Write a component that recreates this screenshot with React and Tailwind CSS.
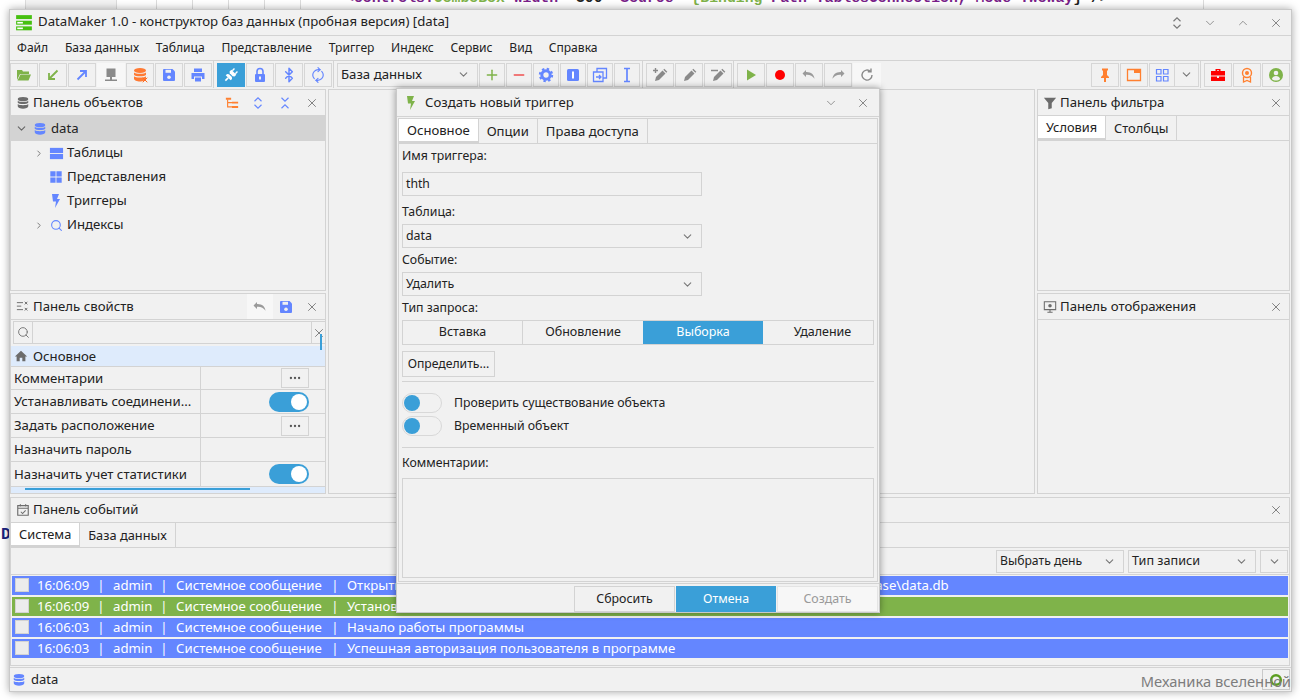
import { ChevronDown, ChevronRight, ChevronUp, X, Plus, Minus, Search, RefreshCw, Bluetooth, Ellipsis } from "lucide-react";

const B = "#6486ff";

function Svg({ size = 16, children, className = "" }) {
  return (
    <svg width={size} height={size} viewBox="0 0 16 16" className={`shrink-0 ${className}`}>
      {children}
    </svg>
  );
}

const Db = ({ color = "#6c6c6c", size = 16 }) => (
  <Svg size={size}>
    <ellipse cx="8" cy="3.500" rx="6" ry="2.500" fill={color} />
    <path d="M2 5.500c1 1.800 11 1.800 12 0v2.200c-1 2-11 2-12 0zM2 9.200c1 1.800 11 1.800 12 0v2.600c0 1.600-3 2.700-6 2.700s-6-1.100-6-2.700z" fill={color} />
  </Svg>
);

const Bolt = ({ color }) => (
  <Svg size={16}>
    <path d="M4 1h7L9 6h3l-5 9 1-6.500H5z" fill={color} />
  </Svg>
);

const Save = ({ color = B }) => (
  <Svg size={16}>
    <path d="M2 3a1 1 0 0 1 1-1h8.500L14 4.500V13a1 1 0 0 1-1 1H3a1 1 0 0 1-1-1z" fill={color} />
    <rect x="4.500" y="2.800" width="5.500" height="3" fill="#f1f1f1" />
    <circle cx="8" cy="10.200" r="1.800" fill="#f1f1f1" />
  </Svg>
);

const Undo = ({ color = "#9a9a9a", flip }) => (
  <Svg>
    <path
      d="M5 3L1.500 6.500 5 10V7.700c3.500-.3 6.500.7 8.500 4-.5-4-3.500-6.800-8.500-6.600z"
      fill={color}
      transform={flip ? "matrix(-1 0 0 1 16 0)" : undefined}
    />
  </Svg>
);

const UpDown = ({ color = "#777", size = 14, className = "" }) => (
  <Svg size={size} className={className}>
    <path d="M4 6l4-4 4 4M4 10l4 4 4-4" fill="none" stroke={color} strokeWidth="1.300" />
  </Svg>
);

const PencilIcon = ({ extra }) => (
  <Svg>
    <path d="M3 14l1-4 6.500-6.500 3 3L7 13z" fill="#8a8a8a" />
    <path d="M11.300 2.700l1-1 3 3-1 1z" fill="#8a8a8a" />
    {extra === "plus" && <path d="M3.500 1v5M1 3.500h5" stroke="#8a8a8a" strokeWidth="1.400" />}
    {extra === "line" && <path d="M1 3.500h7" stroke="#8a8a8a" strokeWidth="1.500" />}
  </Svg>
);

function ToolBtn({ children, active, w = "w-[28px]", muted }) {
  return (
    <div
      className={`h-[24px] ${w} shrink-0 flex items-center justify-center border ${
        active ? "bg-[#3a9fd8] border-[#3a9fd8]" : muted ? "bg-[#f7f7f7] border-[#f7f7f7]" : "border-[#d6d6d6]"
      }`}
    >
      {children}
    </div>
  );
}

const Sep = () => <div className="w-[3px] h-[27px] shrink-0 border-l border-[#d3d3d3]" />;

function CloseBtn() {
  return <X size={14} strokeWidth={1.400} className="text-[#6a6a6a] shrink-0" />;
}

function PanelHead({ icon, title, children, h = "h-[26px]" }) {
  return (
    <div className={`${h} shrink-0 flex items-center pl-[5px] pr-[6px] border-b border-[#d3d3d3]`}>
      <div className="w-[16px] flex justify-start">{icon}</div>
      <span className="ml-[1px] text-[13.2px] text-[#222] flex-1">{title}</span>
      {children}
    </div>
  );
}

function Tabs({ items, size = "text-[12.8px]", pad = "px-[8px]" }) {
  return (
    <div className="h-[25px] shrink-0 flex border-b border-[#d3d3d3]">
      {items.map((t, i) => (
        <div
          key={t}
          className={`${pad} ${size} pt-[2px] flex items-center border-r border-[#d3d3d3] text-[#222] ${
            i === 0 ? "bg-white border-b-2 border-b-[#d3d3d3]" : ""
          }`}
        >
          {t}
        </div>
      ))}
    </div>
  );
}

function TreeRow({ arrow, icon, label }) {
  return (
    <div className="h-[24px] flex items-center pl-[23px] text-[13.2px] text-[#222]">
      <div className="w-[10px] flex justify-center">
        {arrow && <ChevronRight size={13} className="text-[#666]" />}
      </div>
      <div className="w-[18px] ml-[3px] flex justify-center">{icon}</div>
      <span className="ml-[2px]">{label}</span>
    </div>
  );
}

function Toggle({ on }) {
  return (
    <div
      className={`w-[40px] h-[20px] rounded-full flex items-center shrink-0 px-[2px] ${
        on ? "bg-[#3a9fd8] justify-end" : "border border-[#d8d8d8] justify-start pl-[1px]"
      }`}
    >
      <div className={`w-[16px] h-[16px] rounded-full ${on ? "bg-white" : "bg-[#3a9fd8]"}`} />
    </div>
  );
}

function PropRow({ label, children, h = "h-[24px]" }) {
  return (
    <div className={`${h} shrink-0 flex border-b border-[#d3d3d3] text-[13.2px] text-[#222]`}>
      <div className="w-[190px] shrink-0 pl-[3px] pt-[1px] flex items-center border-r border-[#d3d3d3] whitespace-nowrap">{label}</div>
      <div className="flex-1 flex items-center justify-end pr-[16px]">{children}</div>
    </div>
  );
}

const Dots = () => (
  <div className="w-[28px] h-[20px] border border-[#d3d3d3] flex items-center justify-center">
    <Ellipsis size={14} className="text-[#555]" />
  </div>
);

function LogRow({ time, msg, green }) {
  const sep = <span className="w-[24px] text-center shrink-0">|</span>;
  return (
    <div className={`h-[19px] shrink-0 flex items-center text-[13.2px] text-white whitespace-nowrap ${green ? "bg-[#7fb34a]" : "bg-[#6486ff]"}`}>
      <div className="ml-[3px] w-[14px] h-[14px] bg-[#ececec] border border-[#d3d3d3] mb-[2px] shrink-0" />
      <span className="ml-[8px] w-[52px] shrink-0">{time}</span>
      {sep}
      <span className="w-[39px] shrink-0">admin</span>
      {sep}
      <span className="w-[147px] shrink-0">Системное сообщение</span>
      {sep}
      <span>{msg}</span>
    </div>
  );
}

function Select({ value, w = "w-[300px]", h = "h-[24px]", size = "text-[12.4px]" }) {
  return (
    <div className={`${w} ${h} ${size} shrink-0 border border-[#d3d3d3] flex items-center justify-between pl-[3px] pr-[7px] text-[#222]`}>
      <span className="pt-[1px]">{value}</span>
      <ChevronDown size={13} className="text-[#777]" />
    </div>
  );
}

const Label = ({ children, h = "h-[24px]", className = "" }) => (
  <div className={`${h} shrink-0 pt-[1px] flex items-center text-[12.3px] text-[#222] ${className}`}>{children}</div>
);

function Dialog() {
  return (
    <div className="absolute left-[396px] top-[88px] w-[484px] h-[525px] bg-[#f1f1f1] border border-[#c9c9c9] shadow-[0_0_7px_rgba(0,0,0,0.4)] flex flex-col">
      <div className="h-[28px] shrink-0 flex items-center pl-[6px] pr-[9px] border-b border-[#d3d3d3]">
        <Bolt color="#7fb34a" />
        <span className="ml-[6px] text-[13.2px] text-[#222] flex-1">Создать новый триггер</span>
        <ChevronDown size={14} strokeWidth={1.300} className="text-[#777] mr-[18px]" />
        <X size={14} strokeWidth={1.300} className="text-[#666]" />
      </div>
      <div className="h-[464px] shrink-0 mx-[1px] mt-[1px] border border-[#d3d3d3] flex flex-col">
        <Tabs items={["Основное", "Опции", "Права доступа"]} size="text-[13.1px]" />
        <div className="pl-[3px] flex flex-col">
          <Label>Имя триггера:</Label>
          <div className="w-[300px] h-[24px] mt-[4px] border border-[#d3d3d3] flex items-center pl-[3px] text-[12.2px] text-[#222]">thth</div>
          <Label className="mt-[4px]">Таблица:</Label>
          <Select value="data" />
          <Label>Событие:</Label>
          <Select value="Удалить" />
          <Label>Тип запроса:</Label>
          <div className="w-[472px] h-[25px] flex border border-[#d3d3d3] text-[12.5px] text-[#222]">
            <div className="w-[120px] flex items-center justify-center border-r border-[#d3d3d3]">Вставка</div>
            <div className="w-[120px] flex items-center justify-center">Обновление</div>
            <div className="w-[120px] flex items-center justify-center bg-[#3a9fd8] text-white">Выборка</div>
            <div className="flex-1 flex items-center justify-center pl-[9px]">Удаление</div>
          </div>
          <div className="w-[93px] h-[26px] mt-[6px] border border-[#d3d3d3] flex items-center justify-center text-[12.2px] text-[#222]">Определить...</div>
          <div className="w-[472px] h-px mt-[4px] bg-[#d3d3d3]" />
          <div className="flex items-center mt-[11px] text-[12.3px] text-[#222]">
            <Toggle />
            <span className="ml-[12px]">Проверить существование объекта</span>
          </div>
          <div className="flex items-center mt-[3px] text-[12.3px] text-[#222]">
            <Toggle />
            <span className="ml-[12px]">Временный объект</span>
          </div>
          <div className="w-[472px] h-px mt-[11px] bg-[#d3d3d3]" />
          <Label h="h-[30px]">Комментарии:</Label>
          <div className="w-[472px] h-[100px] border border-[#d3d3d3]" />
        </div>
      </div>
      <div className="flex-1 flex items-end justify-end gap-[1px] pr-[1px] border-t border-[#d3d3d3] mt-[1px] text-[12.4px]">
        <div className="w-[101px] h-[26px] border border-[#d3d3d3] flex items-center justify-center text-[#222]">Сбросить</div>
        <div className="w-[100px] h-[26px] bg-[#3a9fd8] flex items-center justify-center text-white">Отмена</div>
        <div className="w-[101px] h-[26px] bg-[#f7f7f7] border border-[#e4e4e4] flex items-center justify-center text-[#9a9a9a]">Создать</div>
      </div>
    </div>
  );
}

export default function App() {
  return (
    <div className="relative w-[1300px] h-[700px] overflow-hidden bg-white font-['Noto_Sans','Open_Sans',sans-serif]">
      {/* code editor peeking out behind the window */}
      <div className="h-[9px] overflow-hidden flex">
        <div className="w-[25px] shrink-0" />
        <div className="w-[92px] shrink-0 bg-[#f3f3f3] border-x border-[#ddd]" />
        <div className="w-[40px] shrink-0 border-r border-[#ddd]" />
        <div className="w-[36px] shrink-0 border-r border-[#ddd]" />
        <div className="w-[36px] shrink-0 border-r border-[#ddd]" />
        <div className="w-[36px] shrink-0 border-r border-[#ddd]" />
        <div className="w-[36px] shrink-0 border-r border-[#ddd]" />
        <div className="w-[903px] shrink-0 border-r border-[#ddd] -mt-[11px] pl-[44px] text-[14.8px] font-bold whitespace-nowrap leading-[18px] font-['Liberation_Mono',monospace] text-[#7a1f8a]">
          &lt;controls:<span className="text-[#7fb34a]">ComboBox</span> Width=<span className="text-[#222]">"300"</span> Source=<span className="text-[#7fb34a]">"{"{"}Binding</span> Path=TablesConnection, Mode=TwoWay<span className="text-[#222]">{"}"}"/&gt;</span>
        </div>
      </div>
      <div className="absolute left-[1px] top-[525px] text-[16px] leading-[20px] font-bold text-[#1a237e] font-['Liberation_Mono',monospace]">D</div>

      <div className="relative ml-[9px] w-[1283px] h-[683px] bg-[#f1f1f1] border border-[#c9c9c9] shadow-[0_0_8px_rgba(0,0,0,0.35)] flex flex-col">
        {/* title */}
        <div className="h-[26px] shrink-0 flex items-center pl-[5px] pr-[8px] border-b border-[#d3d3d3]">
          <Svg size={18}>
            <rect x="1" y="1" width="14" height="3.500" fill="#46c010" />
            <rect x="1" y="6" width="14" height="3.500" fill="#46c010" />
            <rect x="1" y="11" width="14" height="3.500" fill="#46c010" />
            <rect x="2" y="7" width="5" height="1.500" fill="#fff" />
            <rect x="2" y="12" width="5" height="1.500" fill="#fff" />
          </Svg>
          <span className="ml-[5px] text-[13.2px] text-[#222] flex-1 pb-[1px]">
            DataMaker 1.0 - конструктор баз данных (пробная версия) [data]
          </span>
          <UpDown className="mr-[19px]" />
          <ChevronDown size={14} strokeWidth={1.300} className="text-[#777] mr-[19px]" />
          <ChevronUp size={14} strokeWidth={1.300} className="text-[#777] mr-[19px]" />
          <X size={14} strokeWidth={1.300} className="text-[#666]" />
        </div>

        {/* menu */}
        <div className="h-[25px] shrink-0 flex items-center pl-[7px] pt-[1px] gap-[16.700px] text-[12.1px] text-[#222] border-b border-[#d3d3d3]">
          {["Файл", "База данных", "Таблица", "Представление", "Триггер", "Индекс", "Сервис", "Вид", "Справка"].map((m) => (
            <span key={m}>{m}</span>
          ))}
        </div>

        {/* toolbar */}
        <div className="h-[27px] shrink-0 flex items-center gap-[1px] pr-[1px]">
          <ToolBtn>
            <Svg><path d="M1 3h5l1 1.500h6V7H4L1 13z M4.500 7.500H15L12.500 13.500H1.500z" fill="#7fb34a" /></Svg>
          </ToolBtn>
          <ToolBtn>
            <Svg><path d="M12.500 3.500L5 11M4 6v6h6" fill="none" stroke="#7fb34a" strokeWidth="1.800" /></Svg>
          </ToolBtn>
          <ToolBtn>
            <Svg><path d="M3.500 12.500L11 5M6 4h6v6" fill="none" stroke={B} strokeWidth="1.800" /></Svg>
          </ToolBtn>
          <ToolBtn muted>
            <Svg><path d="M3.500 1.500h9V10h-9z M7 10h2v2.500h5V14H2v-1.500h5z" fill="#8a8a8a" /></Svg>
          </ToolBtn>
          <ToolBtn>
            <div className="relative">
              <Db color="#ff7a33" />
              <X size={8} strokeWidth={3} className="absolute -right-[1px] -bottom-[1px] text-[#ff6a20]" />
            </div>
          </ToolBtn>
          <ToolBtn><Save /></ToolBtn>
          <ToolBtn>
            <Svg><path d="M4 1.500h8V5H4z M1.500 6h13v6H12V9.500H4V12H1.500z M5 10.500h6V14.500H5z" fill={B} /></Svg>
          </ToolBtn>
          <Sep />
          <ToolBtn active>
            <Svg>
              <g transform="rotate(45 8 8)" fill="#fff">
                <rect x="5.200" y="1" width="1.400" height="3" />
                <rect x="9.400" y="1" width="1.400" height="3" />
                <path d="M4.500 4h7v2.500L10 7.700H6L4.500 6.500z" />
                <path d="M6 8.800h4L11.500 10v2h-7v-2z" />
                <rect x="7.200" y="12" width="1.600" height="4" />
              </g>
            </Svg>
          </ToolBtn>
          <ToolBtn>
            <Svg>
              <path d="M5 7V4.500a3 3 0 0 1 6 0V7" fill="none" stroke={B} strokeWidth="1.600" />
              <rect x="3" y="7" width="10" height="8" rx="1" fill={B} />
              <rect x="7" y="9.500" width="2" height="3" fill="#f1f1f1" />
            </Svg>
          </ToolBtn>
          <ToolBtn><Bluetooth size={16} strokeWidth={2.200} color={B} /></ToolBtn>
          <ToolBtn><RefreshCw size={14} strokeWidth={2} color={B} className="-rotate-45" /></ToolBtn>
          <Sep />
          <div className="w-[141px] h-[24px] shrink-0 border border-[#d6d6d6] flex items-center justify-between pl-[3px] pr-[7px] text-[13.2px] text-[#222]">
            <span>База данных</span>
            <ChevronDown size={13} className="text-[#777]" />
          </div>
          <ToolBtn w="w-[26px]"><Plus size={16} strokeWidth={2.200} color="#7fb34a" /></ToolBtn>
          <ToolBtn w="w-[26px]"><Minus size={16} strokeWidth={2.400} color="#f05050" /></ToolBtn>
          <ToolBtn w="w-[26px]">
            <Svg>
              <circle cx="8" cy="8" r="4.200" fill="none" stroke={B} strokeWidth="3" />
              <circle cx="8" cy="8" r="6.200" fill="none" stroke={B} strokeWidth="2" strokeDasharray="2.400 2.470" />
            </Svg>
          </ToolBtn>
          <ToolBtn w="w-[26px]">
            <Svg><rect x="2" y="2" width="12" height="12" rx="1.500" fill={B} /><rect x="7" y="4.500" width="2" height="7" fill="#fff" /></Svg>
          </ToolBtn>
          <ToolBtn w="w-[26px]">
            <Svg><path d="M5 5V1.500h9.500V11H11M1.500 5H11v9.500H1.500z M4 10h5M7 8l2 2-2 2" fill="none" stroke={B} strokeWidth="1.300" /></Svg>
          </ToolBtn>
          <ToolBtn w="w-[26px]">
            <Svg><path d="M5 1.500h6M5 14.500h6M8 1.500v13" fill="none" stroke={B} strokeWidth="1.700" /></Svg>
          </ToolBtn>
          <div className="w-0" />
          <Sep />
          <ToolBtn><PencilIcon extra="plus" /></ToolBtn>
          <ToolBtn><PencilIcon /></ToolBtn>
          <ToolBtn><PencilIcon extra="line" /></ToolBtn>
          <Sep />
          <ToolBtn><Svg><path d="M4 2.500l9 5.500-9 5.500z" fill="#7fb34a" /></Svg></ToolBtn>
          <ToolBtn><Svg><circle cx="8" cy="8" r="5" fill="#ff0000" /></Svg></ToolBtn>
          <ToolBtn><Undo /></ToolBtn>
          <ToolBtn><Undo flip /></ToolBtn>
          <ToolBtn muted>
            <Svg><path d="M13 8a5 5 0 1 1-1.500-3.500M12 1.500v3.200H8.800" fill="none" stroke="#8a8a8a" strokeWidth="1.400" /></Svg>
          </ToolBtn>
          <div className="flex-1" />
          <ToolBtn>
            <Svg><path d="M5 1.500h6V3l-1 1v4l2 2v1H9v4H7v-4H4v-1l2-2V4L5 3z" fill="#ff8030" /></Svg>
          </ToolBtn>
          <ToolBtn>
            <Svg><path d="M1.500 2.500h13v11h-13z" fill="none" stroke="#ff8030" strokeWidth="1.300" /><rect x="8" y="2.500" width="6.500" height="3.500" fill="#ff8030" /></Svg>
          </ToolBtn>
          <div className="flex h-[24px] shrink-0 border border-[#d6d6d6]">
            <div className="w-[24px] flex items-center justify-center">
              <Svg><path d="M2.500 2.500h4.500v4.500H2.500zM9.500 2.500H14v4.500H9.500zM2.500 9.500h4.500V14H2.500zM9.500 9.500H14V14H9.500z" fill="none" stroke={B} strokeWidth="1.200" /></Svg>
            </div>
            <div className="w-[24px] border-l border-[#d6d6d6] flex items-center justify-center">
              <ChevronDown size={13} className="text-[#777]" />
            </div>
          </div>
          <Sep />
          <ToolBtn>
            <Svg><path d="M5.500 4V2h5v2H15v4.500H1V4zM7 3.200V4h2v-.8zM1 9.500h6V11h2V9.500h6V14H1z" fill="#ff0000" /></Svg>
          </ToolBtn>
          <ToolBtn>
            <Svg>
              <circle cx="8" cy="6" r="4.500" fill="none" stroke="#ff8030" strokeWidth="1.400" />
              <circle cx="8" cy="6" r="2" fill="#ff8030" />
              <path d="M4.500 10v5l3.500-1.500 3.500 1.500v-5" fill="none" stroke="#ff8030" strokeWidth="1.300" />
            </Svg>
          </ToolBtn>
          <ToolBtn>
            <Svg>
              <circle cx="8" cy="8" r="7" fill="#7fb34a" />
              <circle cx="8" cy="6" r="2.300" fill="#f1f1f1" />
              <path d="M3.800 12c.6-2 2.200-3 4.200-3s3.600 1 4.200 3c-1.200 1-2.600 1.500-4.200 1.500S5 13 3.800 12z" fill="#f1f1f1" />
            </Svg>
          </ToolBtn>
        </div>

        {/* main area */}
        <div className="h-[405px] shrink-0 mt-[1px] flex gap-[2px] pr-[1px]">
          {/* left column */}
          <div className="w-[316px] shrink-0 flex flex-col gap-[2px]">
            <div className="h-[202px] shrink-0 border border-[#d3d3d3] flex flex-col">
              <PanelHead icon={<Db size={14} />} title="Панель объектов">
                <Svg size={14} className="mr-[12px]">
                  <path d="M1 2h6v2.200H1zM8 6.500h7v2.200H8zM8 11.500h7v2.200H8z" fill="#ff8030" />
                  <path d="M3 4v8.500h5M3 7.500h5" fill="none" stroke="#ff8030" strokeWidth="1.300" />
                </Svg>
                <UpDown color={B} className="mr-[13px]" />
                <Svg size={14} className="mr-[13px]"><path d="M4 2l4 4 4-4M4 14l4-4 4 4" fill="none" stroke={B} strokeWidth="1.300" /></Svg>
                <CloseBtn />
              </PanelHead>
              <div className="h-[25px] shrink-0 bg-[#d3d3d3] flex items-center pl-[4px] text-[13.2px] text-[#222]">
                <ChevronDown size={13} className="text-[#666]" />
                <div className="ml-[5px]"><Db color={B} size={14} /></div>
                <span className="ml-[4px]">data</span>
              </div>
              <TreeRow arrow label="Таблицы" icon={
                <Svg size={15}><rect x="1" y="2" width="14" height="5.500" fill={B} /><rect x="1" y="8.500" width="14" height="5.500" fill={B} /></Svg>
              } />
              <TreeRow label="Представления" icon={
                <Svg size={14}><path d="M1.500 1.500h6v6h-6zM8.500 1.500h6v6h-6zM1.500 8.500h6v6h-6zM8.500 8.500h6v6h-6z" fill={B} /></Svg>
              } />
              <TreeRow label="Триггеры" icon={<Bolt color={B} />} />
              <TreeRow arrow label="Индексы" icon={<Search size={13} strokeWidth={2} color={B} />} />
            </div>

            <div className="relative flex-1 min-h-0 border border-[#d3d3d3] flex flex-col overflow-hidden">
              <PanelHead icon={
                <Svg size={14}><path d="M1 3h7M1 7h5M1 11h7M10 2l3 3M13 2l-3 3M10 9l3 3M13 9l-3 3" fill="none" stroke="#6c6c6c" strokeWidth="1.100" /></Svg>
              } title="Панель свойств">
                <div className="w-[26px] h-[25px] bg-[#f7f7f7] flex items-center justify-center mr-[5px]"><Undo /></div>
                <div className="mr-[11px]"><Save /></div>
                <CloseBtn />
              </PanelHead>
              <div className="h-[23px] shrink-0 flex ml-[2px] -mr-[4px] mt-[1px] mb-[2px] border border-[#d3d3d3]">
                <div className="w-[19px] border-r border-[#d3d3d3] flex items-center justify-center">
                  <Search size={13} strokeWidth={1.800} className="text-[#777]" />
                </div>
                <div className="flex-1" />
                <div className="w-[17px] border-l border-[#d3d3d3] flex items-center justify-center pr-[2px]">
                  <CloseBtn />
                </div>
              </div>
              <div className="h-[21px] shrink-0 bg-[#deebfc] flex items-center pl-[3px] text-[13.2px] text-[#222] border-b border-[#d3d3d3]">
                <Svg size={14}><path d="M8 2l7 6.500h-2V14H9.500v-4h-3v4H3V8.500H1z" fill="#6c6c6c" /></Svg>
                <span className="ml-[5px] pt-[1px]">Основное</span>
              </div>
              <PropRow label="Комментарии" h="h-[23px]"><Dots /></PropRow>
              <PropRow label="Устанавливать соединени..."><Toggle on /></PropRow>
              <PropRow label="Задать расположение"><Dots /></PropRow>
              <PropRow label="Назначить пароль" />
              <PropRow label="Назначить учет статистики" h="h-[25px]"><Toggle on /></PropRow>
              <div className="flex-1 bg-[#deebfc]" />
              {/* thin scrollbars lying over the grid */}
              <div className="absolute left-[309px] top-[40px] w-[2px] h-[16px] bg-[#3a9fd8]" />
              <div className="absolute left-[14px] bottom-[3px] w-[225px] h-[2px] bg-[#3a9fd8]" />
            </div>
          </div>

          {/* center */}
          <div className="w-[707px] shrink-0 border border-[#d3d3d3]" />

          {/* right column */}
          <div className="flex-1 flex flex-col gap-[2px]">
            <div className="h-[202px] shrink-0 border border-[#d3d3d3] flex flex-col">
              <PanelHead icon={<Svg size={14}><path d="M1 2h14L10 8v6l-4 1V8z" fill="#6c6c6c" /></Svg>} title="Панель фильтра"><CloseBtn /></PanelHead>
              <Tabs items={["Условия", "Столбцы"]} />
            </div>
            <div className="flex-1 min-h-0 border border-[#d3d3d3] flex flex-col">
              <PanelHead
                icon={
                  <Svg size={14}>
                    <path d="M1.500 2h13v9h-13zM5 14h6M8 11v3" fill="none" stroke="#6c6c6c" strokeWidth="1.200" />
                    <circle cx="8" cy="6.500" r="2" fill="#6c6c6c" />
                  </Svg>
                }
                title="Панель отображения"
              >
                <CloseBtn />
              </PanelHead>
            </div>
          </div>
        </div>

        {/* events */}
        <div className="h-[169px] shrink-0 mt-[3px] mr-[1px] border border-[#d3d3d3] flex flex-col">
          <PanelHead
            h="h-[25px]"
            icon={
              <Svg size={14}>
                <path d="M2 3h12v11H2zM2 6h12M5 1.500V4M11 1.500V4" fill="none" stroke="#6c6c6c" strokeWidth="1.300" />
                <path d="M5.500 10l2 2 3.500-3.500" fill="none" stroke="#6c6c6c" strokeWidth="1.200" />
              </Svg>
            }
            title="Панель событий"
          >
            <CloseBtn />
          </PanelHead>
          <Tabs items={["Система", "База данных"]} />
          <div className="h-[27px] shrink-0 flex items-center justify-end gap-[4px] pr-[1px] border-b border-[#d3d3d3]">
            <Select value="Выбрать день" w="w-[128px]" h="h-[23px]" size="text-[12.2px]" />
            <Select value="Тип записи" w="w-[128px]" h="h-[23px]" size="text-[12.6px]" />
            <div className="w-[28px] h-[23px] border border-[#d3d3d3] flex items-center justify-center">
              <ChevronDown size={13} className="text-[#777]" />
            </div>
          </div>
          <div className="flex flex-col gap-[2px] pt-[1px] px-[1px] overflow-hidden">
            <LogRow time="16:06:09" msg="Открытие базы данных: C:\Users\admin\App\Documents\DataMaker\Projects\Database\data.db" />
            <LogRow time="16:06:09" msg="Установлено соединение с базой данных" green />
            <LogRow time="16:06:03" msg="Начало работы программы" />
            <LogRow time="16:06:03" msg="Успешная авторизация пользователя в программе" />
          </div>
        </div>

        {/* status bar */}
        <div className="flex-1 mt-[1px] border-t border-[#d3d3d3] flex items-center pl-[1px] pt-[1px] text-[13px] text-[#222]">
          <div className="ml-[1px]"><Db color={B} size={14} /></div>
          <span className="ml-[5px]">data</span>
        </div>

        {/* resize grip + watermark lying over the status bar */}
        <div className="absolute right-[1px] bottom-[1px] w-[28px] h-[21px] border border-[#c9c9c9] flex items-center justify-center">
          <Svg size={14}>
            <circle cx="8" cy="8" r="5.500" fill="none" stroke="#5c9e20" strokeWidth="2.800" />
          </Svg>
        </div>
        <div className="absolute right-[0px] -bottom-[1px] text-[14.7px] leading-[21px] text-[#7d7d7d] whitespace-nowrap">
          Механика вселенной
        </div>
      </div>

      <Dialog />
    </div>
  );
}
